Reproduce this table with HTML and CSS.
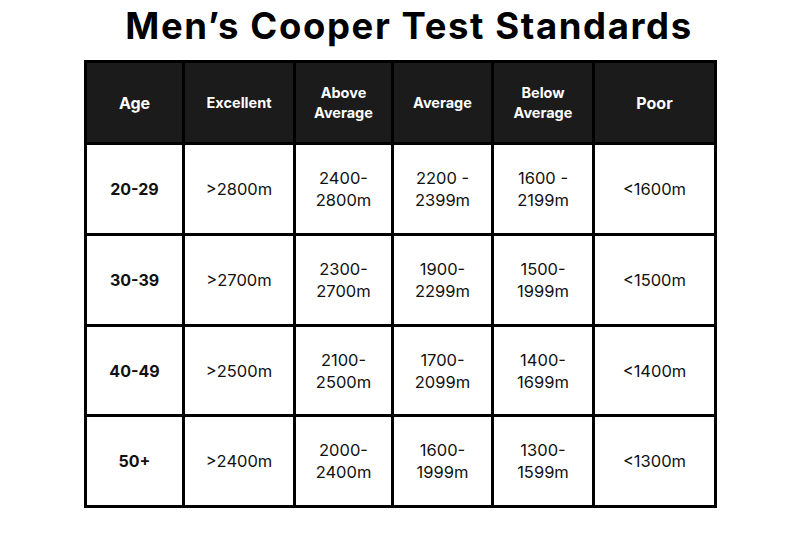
FILE: index.html
```html
<!DOCTYPE html>
<html>
<head>
<meta charset="utf-8">
<link rel="stylesheet" href="styles.css">
</head>
<body>
<h1 class="title">Men’s Cooper Test Standards</h1>
<div class="table">
  <div class="cell head big">Age</div>
  <div class="cell head">Excellent</div>
  <div class="cell head">Above<br>Average</div>
  <div class="cell head">Average</div>
  <div class="cell head">Below<br>Average</div>
  <div class="cell head big">Poor</div>

  <div class="cell age">20-29</div>
  <div class="cell">&gt;2800m</div>
  <div class="cell">2400-<br>2800m</div>
  <div class="cell">2200 -<br>2399m</div>
  <div class="cell">1600 -<br>2199m</div>
  <div class="cell">&lt;1600m</div>

  <div class="cell age">30-39</div>
  <div class="cell">&gt;2700m</div>
  <div class="cell">2300-<br>2700m</div>
  <div class="cell">1900-<br>2299m</div>
  <div class="cell">1500-<br>1999m</div>
  <div class="cell">&lt;1500m</div>

  <div class="cell age">40-49</div>
  <div class="cell">&gt;2500m</div>
  <div class="cell">2100-<br>2500m</div>
  <div class="cell">1700-<br>2099m</div>
  <div class="cell">1400-<br>1699m</div>
  <div class="cell">&lt;1400m</div>

  <div class="cell age">50+</div>
  <div class="cell">&gt;2400m</div>
  <div class="cell">2000-<br>2400m</div>
  <div class="cell">1600-<br>1999m</div>
  <div class="cell">1300-<br>1599m</div>
  <div class="cell">&lt;1300m</div>
</div>
</body>
</html>
```

FILE: styles.css
```css
html, body {
  margin: 0;
  padding: 0;
  background: #ffffff;
}
body {
  width: 800px;
  height: 537px;
  overflow: hidden;
  font-family: Inter, "Liberation Sans", sans-serif;
  color: #111;
}
.title {
  margin: 0 0 8px 0;
  height: 52px;
  line-height: 52px;
  font-size: 36.5px;
  font-weight: 700;
  text-align: center;
  padding-left: 18px;
  letter-spacing: 1.6px;
  color: #000;
}
.table {
  margin-left: 84px;
  width: 633px;
  display: grid;
  grid-template-columns: 95px 108px 95px 97px 98px 119px;
  grid-template-rows: 79px 88px 88px 87px 88px;
  gap: 3px;
  padding: 3px;
  box-sizing: border-box;
  background: #000;
}
.cell {
  background: #fff;
  display: flex;
  align-items: center;
  justify-content: center;
  text-align: center;
  font-size: 16.5px;
  line-height: 22px;
  color: #111;
}
.head {
  background: #1b1b1b;
  color: #fff;
  font-weight: 700;
  font-size: 14.5px;
  line-height: 20px;
}
.head.big {
  font-size: 16px;
}
.age {
  font-weight: 700;
  font-size: 16px;
}
```
